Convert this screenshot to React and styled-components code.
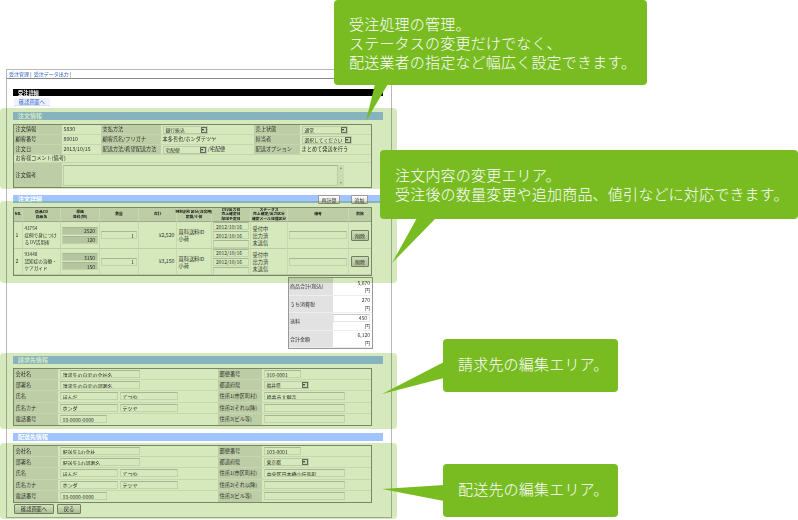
import React from 'react'
import styled, { createGlobalStyle } from 'styled-components'

const GlobalStyle = createGlobalStyle`
  html, body { margin: 0; padding: 0; background: #fff; }
  body { font-family: "Noto Sans CJK JP", "Noto Sans", sans-serif; }
  * { box-sizing: border-box; }
`

const itemRows = [
  { no: 1, code: '43754', name: ['症例で身につけ', 'る DV活用術'], price: '2520', fee: '120', total: '¥2,520', h: 27 },
  { no: 2, code: '93440', name: ['認知症の治療・', 'ケアガイド'], price: '3150', fee: '150', total: '¥3,150', h: 26 },
]

const billing = {
  company: '請求先の自宅の会社名', dept: '請求先の自宅の部署名', zip: '910-0001', pref: '福井県', addr: '福井市大願寺',
}
const shipping = {
  company: '配送先1の会社', dept: '配送先1の部署名', zip: '103-0001', pref: '東京都', addr: '中央区日本橋小伝馬町',
}

const totals = [
  { label: '商品合計(税込)', value: '5,670' },
  { label: 'うち消費税', value: '270' },
  { label: '送料', value: '450', edit: true },
  { label: '合計金額', value: '6,120' },
]

function Select({ w, children }) {
  return (
    <SelectBox $w={w}>
      <span>{children}</span>
      <SelectArrow />
    </SelectBox>
  )
}

function AddressTable({ data }) {
  return (
    <AddressGrid>
      <Cell $head>会社名</Cell>
      <Cell><Field $w={80} readOnly defaultValue={data.company} /></Cell>
      <Cell $head>郵便番号</Cell>
      <Cell><Field $w={37} readOnly defaultValue={data.zip} /></Cell>

      <Cell $head>部署名</Cell>
      <Cell><Field $w={80} readOnly defaultValue={data.dept} /></Cell>
      <Cell $head>都道府県</Cell>
      <Cell><Select w={45}>{data.pref}</Select></Cell>

      <Cell $head>氏名</Cell>
      <Cell $gap>
        <Field $w={58} readOnly defaultValue="ほんだ" />
        <Field $w={58} readOnly defaultValue="てつや" />
      </Cell>
      <Cell $head>住所1(市区町村)</Cell>
      <Cell><Field $w={81} readOnly defaultValue={data.addr} /></Cell>

      <Cell $head>氏名カナ</Cell>
      <Cell $gap>
        <Field $w={58} readOnly defaultValue="ホンダ" />
        <Field $w={58} readOnly defaultValue="テツヤ" />
      </Cell>
      <Cell $head>住所2(それ以降)</Cell>
      <Cell><Field $w={81} readOnly /></Cell>

      <Cell $head $last>電話番号</Cell>
      <Cell $last><Field $w={47} readOnly defaultValue="03-0000-0000" /></Cell>
      <Cell $head $last>住所3(ビル等)</Cell>
      <Cell $last><Field $w={81} readOnly /></Cell>
    </AddressGrid>
  )
}

export default function App() {
  return (
    <Screen>
      <GlobalStyle />
      <Doc>
        <Frame>
          <Nav><a>受注管理</a> | &nbsp;<a>受注データ出力</a> |</Nav>
          <Content>
            <TitleBar>受注詳細</TitleBar>
            <BackTab>確認画面へ</BackTab>

            <Section $mt={6}>
              <SectionHead>注文情報</SectionHead>
              <OrderGrid>
                <Cell $head>注文情報</Cell>
                <Cell>5830</Cell>
                <Cell $head>支払方法</Cell>
                <Cell><Select w={45}>銀行振込</Select></Cell>
                <Cell $head>売上状態</Cell>
                <Cell><Select w={46}>通常</Select></Cell>

                <Cell $head>顧客番号</Cell>
                <Cell>80010</Cell>
                <Cell $head>顧客氏名/フリガナ</Cell>
                <Cell>本多哲也/ホンダテツヤ</Cell>
                <Cell $head>担当者</Cell>
                <Cell><Select w={50}>選択してください</Select></Cell>

                <Cell $head>注文日</Cell>
                <Cell>2013/10/15</Cell>
                <Cell $head>配送方法/希望配送方法</Cell>
                <Cell><Select w={44}>宅配便</Select>&nbsp;/宅配便</Cell>
                <Cell $head>配送オプション</Cell>
                <Cell>まとめて発送を行う</Cell>

                <WideCell>お客様コメント(備考)</WideCell>

                <Cell $head $last>注文備考</Cell>
                <MemoCell>
                  <MemoArea />
                  <MemoScroll />
                </MemoCell>
              </OrderGrid>
              <Band $top={-4} $height={81} />
            </Section>

            <Section $mt={7}>
              <SectionHead>
                注文詳細
                <HeadActions>
                  <SmallButton $w={22}>再計算</SmallButton>
                  <SmallButton $w={17}>追加</SmallButton>
                </HeadActions>
              </SectionHead>
              <ItemGrid>
                <HeadCell>No.</HeadCell>
                <HeadCell>商品CD<br />商品名</HeadCell>
                <HeadCell>単価<br />送料(税)</HeadCell>
                <HeadCell>数量</HeadCell>
                <HeadCell>合計</HeadCell>
                <HeadCell>特別割引区分(注文時)<br />定期/小荷</HeadCell>
                <HeadCell>CSV出力日<br />売上確定日<br />配送予定日</HeadCell>
                <HeadCell>ステータス<br />売上確定/出力区分<br />確定メール送信区分</HeadCell>
                <HeadCell>備考</HeadCell>
                <HeadCell $end>削除</HeadCell>
                {itemRows.map((row) => (
                  <React.Fragment key={row.no}>
                    <ItemCell>{row.no}</ItemCell>
                    <ItemCell $stack>
                      <TinyLine>{row.code}</TinyLine>
                      <ProductLine>{row.name[0]}</ProductLine>
                      <ProductLine>{row.name[1]}</ProductLine>
                    </ItemCell>
                    <ItemCell $stack $center>
                      <Field $w={36} $muted $right readOnly defaultValue={row.price} />
                      <Field $w={36} $muted $right readOnly defaultValue={row.fee} />
                    </ItemCell>
                    <ItemCell $center><Field $w={36} $right readOnly defaultValue="1" /></ItemCell>
                    <ItemCell $right>{row.total}</ItemCell>
                    <ItemCell $stack>
                      <NameLine>買科送料ID</NameLine>
                      <NameLine>小荷</NameLine>
                    </ItemCell>
                    <ItemCell $stack $center>
                      <Field $w={36} readOnly defaultValue="2012/10/16" />
                      <Field $w={36} readOnly defaultValue="2012/10/16" />
                      <Field $w={36} readOnly />
                    </ItemCell>
                    <ItemCell $stack>
                      <NameLine>受付中</NameLine>
                      <NameLine>出力済</NameLine>
                      <NameLine>未送信</NameLine>
                    </ItemCell>
                    <ItemCell $center><Field $w={58} readOnly /></ItemCell>
                    <ItemCell $center $end><DeleteButton>削除</DeleteButton></ItemCell>
                  </React.Fragment>
                ))}
              </ItemGrid>
              <Band $top={6} $height={82} />
            </Section>

            <TotalsGrid>
              {totals.map((t) => (
                <React.Fragment key={t.label}>
                  <TotalLabel>{t.label}</TotalLabel>
                  <TotalValue>
                    {t.edit ? <Field $w={37} $right readOnly defaultValue={t.value} /> : <span>{t.value}</span>}
                    <span>円</span>
                  </TotalValue>
                </React.Fragment>
              ))}
            </TotalsGrid>

            <Section $mt={7}>
              <SectionHead>請求先情報</SectionHead>
              <AddressTable data={billing} />
              <Band $top={-3} $height={76} />
            </Section>

            <Section $mt={7}>
              <SectionHead>配送先情報</SectionHead>
              <AddressTable data={shipping} />
              <FooterButtons>
                <FootButton $w={40}>確認画面へ</FootButton>
                <FootButton $w={24}>戻る</FootButton>
              </FooterButtons>
              <Band $top={10} $height={76} />
            </Section>
          </Content>
        </Frame>
      </Doc>

      <Callout $x={334} $y={0} $w={313} $h={85} $pad={14}>
        <Tail><polygon points="41,84 54,84 32,121" /></Tail>
        受注処理の管理。<br />
        ステータスの変更だけでなく、<br />
        配送業者の指定など幅広く設定できます。
      </Callout>
      <Callout $x={380} $y={150} $w={418} $h={69} $pad={15}>
        <Tail><polygon points="37,68 56,68 12,113" /></Tail>
        注文内容の変更エリア。<br />
        受注後の数量変更や追加商品、値引などに対応できます。
      </Callout>
      <Callout $x={443} $y={339} $w={175} $h={53} $pad={15}>
        <Tail><polygon points="1,23 1,39 -61,55" /></Tail>
        請求先の編集エリア。
      </Callout>
      <Callout $x={443} $y={464} $w={175} $h={53} $pad={15}>
        <Tail><polygon points="1,21 1,37 -61,25" /></Tail>
        配送先の編集エリア。
      </Callout>
    </Screen>
  )
}

const Screen = styled.div`
  position: relative;
  width: 798px;
  height: 520px;
  overflow: hidden;
  background: #fff;
`
const Doc = styled.div`
  width: 798px;
  height: 520px;
  padding: 69px 0 0 6px;
  background: #fff;
  filter: blur(0.42px);
  color: #333;
  font-size: 5.2px;
  line-height: 1.2;
`
const Frame = styled.div`
  width: 386px;
  height: 449px;
  border: 1px solid #b8b8b8;
`
const Nav = styled.div`
  height: 9px;
  line-height: 8px;
  padding-left: 2px;
  border-bottom: 1px solid #888;
  color: #333;
  font-size: 5px;
  a { color: #2a5fc0; }
`
const Content = styled.div`
  padding: 10px 8px 0 6px;
`
const TitleBar = styled.div`
  height: 7px;
  line-height: 7px;
  padding-left: 5px;
  background: #000;
  color: #fff;
  font-weight: 700;
`
const BackTab = styled.div`
  width: 36px;
  height: 8px;
  line-height: 8px;
  margin: 2px 0 0 1px;
  text-align: center;
  background: #eef2ff;
  border-bottom: 1px solid #d8e0f4;
  color: #2a5fc0;
`
const Section = styled.section`
  position: relative;
  margin-top: ${(p) => p.$mt}px;
`
const SectionHead = styled.div`
  display: flex;
  height: 8px;
  line-height: 8px;
  padding-left: 5px;
  background: #a0c4ff;
  color: #fff;
  font-size: 6px;
  font-weight: 700;
`
const HeadActions = styled.div`
  display: flex;
  gap: 11px;
  margin-left: auto;
  padding-right: 15px;
`
const SmallButton = styled.div`
  width: ${(p) => p.$w}px;
  height: 9px;
  line-height: 7px;
  text-align: center;
  background: linear-gradient(#fff, #ddd);
  border: 1px solid #999;
  border-radius: 1px;
  color: #333;
  font-size: 5px;
  font-weight: 400;
`
const Band = styled.div`
  position: absolute;
  left: -13px;
  top: ${(p) => p.$top}px;
  width: 397px;
  height: ${(p) => p.$height}px;
  background: #d6e9bd;
  border-radius: 4px;
  mix-blend-mode: multiply;
  pointer-events: none;
`
const Grid = styled.div`
  display: grid;
  width: 359px;
  margin-top: 4px;
  border: 1px solid #8f958a;
  background: #fff;
`
const OrderGrid = styled(Grid)`
  height: 64px;
  grid-template-columns: 48px 39px 60px 93px 46px 1fr;
  grid-template-rows: 10px 10px 10px 8px 24px;
`
const ItemGrid = styled(Grid)`
  height: 69px;
  grid-template-columns: 9px 38px 39px 39px 38px 35px 39px 37px 61px 22px;
  grid-template-rows: 14px 27px 26px;
`
const AddressGrid = styled(Grid)`
  height: 58px;
  grid-template-columns: 44px 160px 44px 1fr;
  grid-template-rows: repeat(5, 1fr);
`
const Cell = styled.div`
  display: flex;
  align-items: center;
  gap: ${(p) => (p.$gap ? '2px' : '0')};
  padding: 0 1.5px;
  white-space: nowrap;
  background: ${(p) => (p.$head ? '#e2e2e2' : '#fff')};
  border-bottom: ${(p) => (p.$last ? '0' : '1px solid #ececec')};
`
const WideCell = styled(Cell)`
  grid-column: 1 / -1;
`
const MemoCell = styled(Cell)`
  grid-column: 2 / -1;
  border-bottom: 0;
  padding: 1px 27px 1px 1px;
`
const MemoArea = styled.div`
  flex: 1;
  height: 21px;
  background: #fff;
  border: 1px solid #e0e0e0;
  border-top-color: #c4c4c4;
`
const MemoScroll = styled.div`
  position: relative;
  width: 6px;
  height: 21px;
  background: #f1f1f1;
  &::before, &::after {
    content: '';
    position: absolute;
    left: 1.5px;
    border-left: 1.5px solid transparent;
    border-right: 1.5px solid transparent;
  }
  &::before { top: 2px; border-bottom: 2px solid #999; }
  &::after { bottom: 2px; border-top: 2px solid #999; }
`
const HeadCell = styled.div`
  display: flex;
  align-items: center;
  justify-content: center;
  text-align: center;
  white-space: nowrap;
  background: #e2e2e2;
  border-bottom: 1px solid #bbb;
  border-right: ${(p) => (p.$end ? '0' : '1px solid #eee')};
  color: #222;
  font-size: 3.8px;
  line-height: 4.2px;
  font-weight: 700;
`
const ItemCell = styled.div`
  display: flex;
  flex-direction: ${(p) => (p.$stack ? 'column' : 'row')};
  align-items: ${(p) => (p.$stack ? (p.$center ? 'center' : 'flex-start') : 'center')};
  justify-content: ${(p) => (p.$right ? 'flex-end' : p.$center ? 'center' : 'flex-start')};
  ${(p) => p.$stack && 'justify-content: center;'}
  gap: ${(p) => (p.$stack && p.$center ? '1px' : '0')};
  padding: 0 1.5px;
  white-space: nowrap;
  background: #fff;
  border-bottom: 1px solid #e0e0e0;
  border-right: ${(p) => (p.$end ? '0' : '1px solid #eee')};
`
const TinyLine = styled.div`
  font-size: 4.6px;
  line-height: 7px;
`
const ProductLine = styled.div`
  font-size: 4.6px;
  line-height: 7px;
`
const NameLine = styled.div`
  font-size: 5.2px;
  line-height: 7px;
`
const Field = styled.input`
  flex: none;
  width: ${(p) => p.$w}px;
  height: 8px;
  padding: 0 2px;
  margin: 0;
  outline: none;
  font-family: inherit;
  font-size: 5px;
  line-height: 6px;
  color: #333;
  text-align: ${(p) => (p.$right ? 'right' : 'left')};
  background: ${(p) => (p.$muted ? '#d8d8d8' : '#fff')};
  border: 1px solid #e6e6e6;
  border-top-color: #c6c6c6;
  border-radius: 0;
`
const SelectBox = styled.div`
  display: flex;
  flex: none;
  align-items: center;
  justify-content: space-between;
  width: ${(p) => p.$w}px;
  height: 8px;
  padding-left: 2px;
  background: #fff;
  border: 1px solid #ddd;
  font-size: 4.8px;
  overflow: hidden;
`
const SelectArrow = styled.i`
  display: block;
  flex: none;
  position: relative;
  width: 6px;
  height: 6px;
  background: #eee;
  border: 1px solid #777;
  &::after {
    content: '';
    position: absolute;
    left: 0.5px;
    top: 1px;
    border-left: 1.5px solid transparent;
    border-right: 1.5px solid transparent;
    border-top: 2px solid #222;
  }
`
const DeleteButton = styled.div`
  width: 18px;
  height: 11px;
  line-height: 9px;
  text-align: center;
  font-size: 5px;
  background: linear-gradient(#f4f4f4, #d0d0d0);
  border: 1px solid #888;
  border-radius: 1px;
`
const TotalsGrid = styled.div`
  display: grid;
  grid-template-columns: 44px 1fr;
  grid-template-rows: repeat(4, 1fr);
  width: 85px;
  height: 72px;
  margin: 1px 0 0 275px;
  border: 1px solid #999;
`
const TotalLabel = styled.div`
  display: flex;
  align-items: center;
  padding-left: 1px;
  background: #e2e2e2;
  border-bottom: 1px solid #eee;
  white-space: nowrap;
  font-size: 5px;
`
const TotalValue = styled.div`
  display: flex;
  flex-direction: column;
  align-items: flex-end;
  justify-content: center;
  padding-right: 2px;
  line-height: 7.5px;
  border-bottom: 1px solid #eee;
  font-size: 5px;
`
const FooterButtons = styled.div`
  display: flex;
  gap: 3px;
  margin: 0.5px 0 0 1px;
`
const FootButton = styled.div`
  width: ${(p) => p.$w}px;
  height: 10px;
  line-height: 8px;
  text-align: center;
  font-size: 5.2px;
  background: linear-gradient(#fafafa, #ccc);
  border: 1px solid #888;
  border-radius: 1px;
`
const Callout = styled.div`
  position: absolute;
  left: ${(p) => p.$x}px;
  top: ${(p) => p.$y}px;
  width: ${(p) => p.$w}px;
  height: ${(p) => p.$h}px;
  padding: ${(p) => p.$pad}px 0 0 15px;
  background: #78bc22;
  border-radius: 4px;
  color: #fff;
  font-size: 15px;
  font-weight: 300;
  line-height: 19px;
  letter-spacing: 0.2px;
  white-space: nowrap;
`
const Tail = styled.svg`
  position: absolute;
  left: 0;
  top: 0;
  width: 1px;
  height: 1px;
  overflow: visible;
  fill: #78bc22;
`
